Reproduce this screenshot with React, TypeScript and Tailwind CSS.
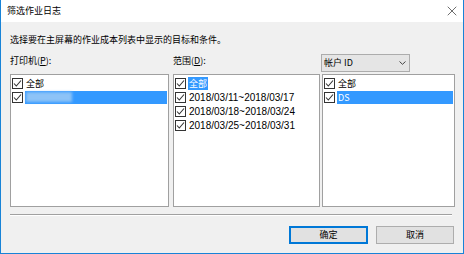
import { X } from 'lucide-react';

const cjk = '[font-family:"Noto_Sans_CJK_SC","Noto_Sans",sans-serif]';
const mixed = '[font-family:"Liberation_Sans","Noto_Sans_CJK_SC",sans-serif]';

function Check() {
  return (
    <svg width="11" height="11" viewBox="0 0 11 11" className="shrink-0">
      <rect x="0.5" y="0.5" width="10" height="10" fill="#fff" stroke="#333" />
      <path d="M2 5.5 L4.3 8 L9 2.5" fill="none" stroke="#333" strokeWidth="1.1" />
    </svg>
  );
}

interface Row {
  label: string;
  selected?: 'full' | 'text';
  blur?: boolean;
  date?: boolean;
}

function ListBox({ rows, width }: { rows: Row[]; width: string }) {
  return (
    <div className={`${width} h-[133px] border border-[#a0a0a0] bg-white pt-[1px] pl-[1px] pr-[1px]`}>
      {rows.map((r) => (
        <div key={r.label + r.blur} className="h-[14px] flex items-center">
          <Check />
          <div className={`ml-[2px] h-[13px] flex items-center ${r.selected === 'full' ? 'flex-1 bg-[#3399ff]' : ''}`}>
            {r.blur ? (
              <span className="ml-[1px] w-[46px] h-[10px] bg-[#8dc3f7] blur-[1.5px]" />
            ) : (
              <span
                className={`px-[1px] leading-[13px] ${r.date ? `${mixed} text-[10px]` : `${cjk} text-[9px]`} ${
                  r.selected ? 'bg-[#3399ff] text-white' : 'text-black'
                }`}
              >
                {r.label}
              </span>
            )}
          </div>
        </div>
      ))}
    </div>
  );
}

export default function App() {
  return (
    <div className={`w-[464px] h-[254px] flex flex-col bg-[#f0f0f0] border-x border-b border-[#1883d7] ${cjk} text-black`}>
      {/* title bar */}
      <div className="h-[22px] bg-white flex items-center justify-between pl-[6px] pr-[3px]">
        <span className="text-[9px] leading-[12px]">筛选作业日志</span>
        <X size={16} strokeWidth={1} className="text-[#222]" />
      </div>

      <div className="flex-1 flex flex-col pl-[9px] pr-[8px]">
        <div className="pt-[12px] text-[9px] leading-[12px]">选择要在主屏幕的作业成本列表中显示的目标和条件。</div>

        <div className="mt-[8px] flex">
          {/* printers */}
          <div className="w-[159px] flex flex-col">
            <div className="h-[20px] pt-[1px] text-[9px] leading-[12px]">
              打印机(<span className="underline">P</span>):
            </div>
            <ListBox
              width="w-[159px]"
              rows={[{ label: '全部' }, { label: 'printer', selected: 'full', blur: true }]}
            />
          </div>

          {/* range */}
          <div className="ml-[4px] w-[147px] flex flex-col">
            <div className="h-[20px] pt-[1px] text-[9px] leading-[12px]">
              范围(<span className="underline">D</span>):
            </div>
            <ListBox
              width="w-[147px]"
              rows={[
                { label: '全部', selected: 'text' },
                { label: '2018/03/11~2018/03/17', date: true },
                { label: '2018/03/18~2018/03/24', date: true },
                { label: '2018/03/25~2018/03/31', date: true },
              ]}
            />
          </div>

          {/* account */}
          <div className="ml-[1px] flex flex-col">
            <div className="h-[20px]">
              <div className="w-[89px] h-[18px] bg-[#e5e5e5] border border-[#acacac] flex items-center justify-between pl-[2px] pr-[3px]">
                <span className="text-[9px] leading-[12px]">帐户 ID</span>
                <svg width="7" height="4" viewBox="0 0 7 4">
                  <path d="M0.5 0.5 L3.5 3.3 L6.5 0.5" fill="none" stroke="#444" strokeWidth="1" />
                </svg>
              </div>
            </div>
            <div className="ml-[1px]">
              <ListBox width="w-[133px]" rows={[{ label: '全部' }, { label: 'DS', selected: 'full' }]} />
            </div>
          </div>
        </div>

        {/* separator */}
        <div className="mt-[7px] mr-[3px] h-[2px] border-t border-b border-t-[#a0a0a0] border-b-white" />

        <div className="mt-[10px] flex justify-end gap-[8px] mr-[1px]">
          <button className="w-[79px] h-[18px] bg-[#e1e1e1] border-2 border-[#0078d7] text-[9px] leading-[12px] flex items-center justify-center">
            确定
          </button>
          <button className="w-[78px] h-[18px] bg-[#e1e1e1] border border-[#adadad] text-[9px] leading-[12px] flex items-center justify-center">
            取消
          </button>
        </div>
      </div>
    </div>
  );
}
